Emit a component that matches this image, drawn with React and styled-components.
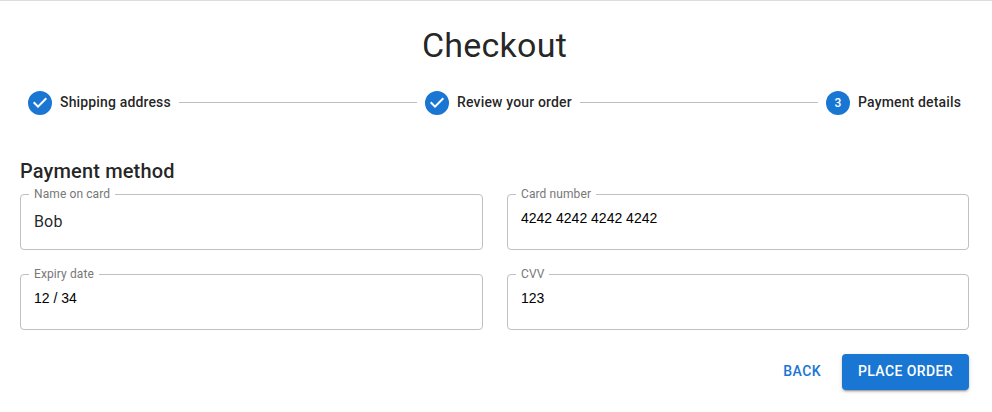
import React from "react";
import styled, { createGlobalStyle } from "styled-components";

const Global = createGlobalStyle`
  *, *::before, *::after { box-sizing: border-box; }
  body { margin: 0; background: #fff; color: rgba(0,0,0,.87); font-family: Roboto, sans-serif; }
`;
const Page = styled.main`
  height: 412px;
  border-top: 1px solid #dcdcdc;
  padding: 23px 23px 0 20px;
`;
const Title = styled.h1`
  margin: 0;
  font-size: 34px;
  line-height: 42px;
  font-weight: 400;
  letter-spacing: 0.25px;
  text-align: center;
`;
const Stepper = styled.ol`
  display: flex;
  align-items: center;
  list-style: none;
  margin: 25px 0 0;
  padding: 0 8px;
  height: 24px;
`;
const Step = styled.li`
  display: flex;
  align-items: center;
  gap: 8px;
`;
const StepLabel = styled.span`
  padding-bottom: 2px;
  font-size: 14px;
  line-height: 20px;
  font-weight: 500;
  letter-spacing: 0.15px;
  white-space: nowrap;
`;
const Connector = styled.li`
  flex: 1;
  height: 1px;
  margin: 0 8px 2px;
  background: #bdbdbd;
`;
const StepIcon = styled.svg`
  width: 24px;
  height: 24px;
  fill: #1976d2;
`;
const StepNumber = styled.text`
  fill: #fff;
  font-size: 12px;
  font-weight: 500;
`;
const Heading = styled.h2`
  margin: 40px 0 0;
  font-size: 20px;
  line-height: 32px;
  font-weight: 500;
  letter-spacing: 0.15px;
`;
const Form = styled.form`
  margin-top: -3px;
`;
const Fields = styled.div`
  display: grid;
  grid-template-columns: 463px 462px;
  gap: 14px 24px;
`;
const Outline = styled.fieldset`
  margin: 0;
  min-width: 0;
  height: 66px;
  padding: 0 8px;
  border: 1px solid #c0c0c0;
  border-radius: 4px;
`;
const Label = styled.legend`
  padding: 0 5px;
  font-size: 12px;
  line-height: 20px;
  letter-spacing: 0.1px;
  color: #777;
`;
const Value = styled.div`
  padding: ${p => (p.$large ? "6px" : "3px")} 5px 0;
  font-family: ${p => (p.$large ? "Roboto" : '"Liberation Sans"')}, sans-serif;
  font-size: ${p => (p.$large ? "16px" : "14px")};
  line-height: 23px;
  letter-spacing: ${p => (p.$large ? "0.15px" : "0")};
  color: ${p => (p.$large ? "rgba(0,0,0,.87)" : "#000")};
`;
const Actions = styled.div`
  display: flex;
  justify-content: flex-end;
  gap: 13px;
  margin-top: 24px;
`;
const Button = styled.button`
  height: 36px;
  padding: 0 ${p => (p.$primary ? "16px" : "8px")} 2px;
  border: 0;
  border-radius: 4px;
  background: ${p => (p.$primary ? "#1976d2" : "transparent")};
  color: ${p => (p.$primary ? "#fff" : "#1976d2")};
  box-shadow: ${p => (p.$primary ? "0 3px 1px -2px rgba(0,0,0,.2), 0 2px 2px rgba(0,0,0,.14), 0 1px 5px rgba(0,0,0,.12)" : "none")};
  font: 500 14px/24px Roboto, sans-serif;
  letter-spacing: 0.4px;
  text-transform: uppercase;
`;

const steps = ["Shipping address", "Review your order", "Payment details"];
const fields = [
  { label: "Name on card", value: "Bob", large: true },
  { label: "Card number", value: "4242 4242 4242 4242" },
  { label: "Expiry date", value: "12 / 34" },
  { label: "CVV", value: "123" },
];

export default function App() {
  return (
    <Page>
      <Global />
      <Title>Checkout</Title>
      <Stepper>
        {steps.map((name, i) => (
          <React.Fragment key={name}>
            {i > 0 && <Connector aria-hidden="true" />}
            <Step>
              <StepIcon viewBox="0 0 24 24">
                {i < 2 ? (
                  <path d="M12 0a12 12 0 1 0 0 24 12 12 0 0 0 0-24zm-2 17l-5-5 1.4-1.4 3.6 3.6 7.6-7.6L19 8l-9 9z" />
                ) : (
                  <>
                    <circle cx="12" cy="12" r="12" />
                    <StepNumber x="12" y="16" textAnchor="middle">3</StepNumber>
                  </>
                )}
              </StepIcon>
              <StepLabel>{name}</StepLabel>
            </Step>
          </React.Fragment>
        ))}
      </Stepper>
      <Heading>Payment method</Heading>
      <Form>
        <Fields>
          {fields.map(f => (
            <Outline key={f.label}>
              <Label>{f.label}</Label>
              <Value $large={f.large}>{f.value}</Value>
            </Outline>
          ))}
        </Fields>
        <Actions>
          <Button type="button">Back</Button>
          <Button type="button" $primary>Place order</Button>
        </Actions>
      </Form>
    </Page>
  );
}
